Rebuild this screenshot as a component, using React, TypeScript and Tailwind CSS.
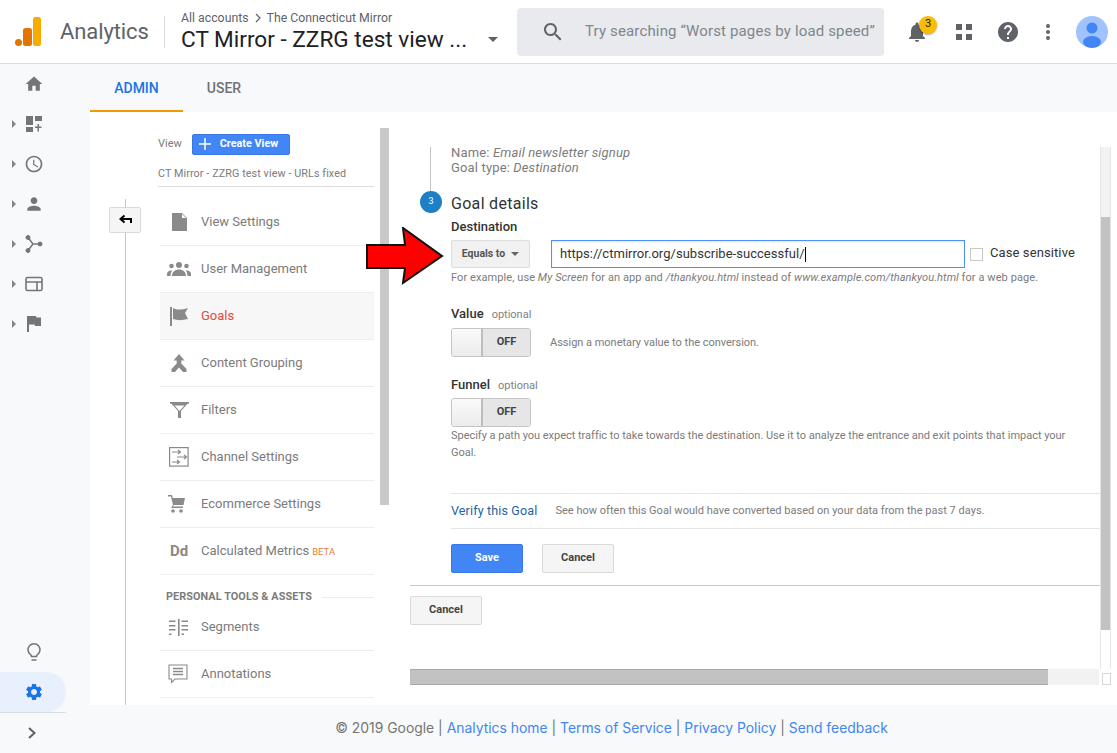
import React from "react";

function P({ d, size = 20, className = "" }: { d: string; size?: number; className?: string }) {
  return (
    <svg width={size} height={size} viewBox="0 0 24 24" fill="currentColor" className={className}>
      <path d={d} />
    </svg>
  );
}

const home = "M10 20v-6h4v6h5v-8h3L12 3 2 12h3v8z";
const person = "M12 12c2.21 0 4-1.79 4-4s-1.79-4-4-4-4 1.79-4 4 1.79 4 4 4zm0 2c-2.67 0-8 1.34-8 4v2h16v-2c0-2.66-5.33-4-8-4z";
const clock = "M11.99 2C6.47 2 2 6.48 2 12s4.47 10 9.99 10C17.52 22 22 17.52 22 12S17.52 2 11.99 2zM12 20c-4.42 0-8-3.58-8-8s3.58-8 8-8 8 3.58 8 8-3.58 8-8 8zm.5-13H11v6l5.25 3.15.75-1.23-4.5-2.67z";
const gear = "M19.14 12.94c.04-.3.06-.61.06-.94 0-.32-.02-.64-.07-.94l2.03-1.58c.18-.14.23-.41.12-.61l-1.92-3.32c-.12-.22-.37-.29-.59-.22l-2.39.96c-.5-.38-1.03-.7-1.62-.94l-.36-2.54c-.04-.24-.24-.41-.48-.41h-3.84c-.24 0-.43.17-.47.41l-.36 2.54c-.59.24-1.13.57-1.62.94l-2.39-.96c-.22-.08-.47 0-.59.22L2.74 8.87c-.12.21-.08.47.12.61l2.03 1.58c-.05.3-.09.63-.09.94s.02.64.07.94l-2.03 1.58c-.18.14-.23.41-.12.61l1.92 3.32c.12.22.37.29.59.22l2.39-.96c.5.38 1.03.7 1.62.94l.36 2.54c.05.24.24.41.48.41h3.84c.24 0 .44-.17.47-.41l.36-2.54c.59-.24 1.13-.56 1.62-.94l2.39.96c.22.08.47 0 .59-.22l1.92-3.32c.12-.22.07-.47-.12-.61l-2.01-1.58zM12 15.6c-1.98 0-3.6-1.62-3.6-3.6s1.62-3.6 3.6-3.6 3.6 1.62 3.6 3.6-1.62 3.6-3.6 3.6z";
const bell = "M12 22c1.1 0 2-.9 2-2h-4c0 1.1.89 2 2 2zm6-6v-5c0-3.07-1.64-5.64-4.5-6.32V4c0-.83-.67-1.5-1.5-1.5s-1.5.67-1.5 1.5v.68C7.63 5.36 6 7.92 6 11v5l-2 2v1h16v-1l-2-2z";
const help = "M12 2C6.48 2 2 6.48 2 12s4.48 10 10 10 10-4.48 10-10S17.52 2 12 2zm1 17h-2v-2h2v2zm2.07-7.75l-.9.92C13.45 12.9 13 13.5 13 15h-2v-.5c0-1.1.45-2.1 1.17-2.83l1.24-1.26c.37-.36.59-.86.59-1.41 0-1.1-.9-2-2-2s-2 .9-2 2H8c0-2.21 1.79-4 4-4s4 1.79 4 4c0 .88-.36 1.68-.93 2.25z";
const search = "M15.5 14h-.79l-.28-.27C15.41 12.59 16 11.11 16 9.5 16 5.91 13.09 3 9.5 3S3 5.91 3 9.5 5.91 16 9.5 16c1.61 0 3.09-.59 4.23-1.57l.27.28v.79l5 4.99L20.49 19l-4.99-5zm-6 0C7.01 14 5 11.99 5 9.5S7.01 5 9.5 5 14 7.01 14 9.5 11.99 14 9.5 14z";

function RailIcon({ children, caret = true }: { children: React.ReactNode; caret?: boolean }) {
  return (
    <div className="relative flex h-10 w-[68px] items-center justify-center text-[#757575]">
      {caret && (
        <span className="absolute left-3 top-[16px] h-0 w-0 border-y-[4px] border-l-[4px] border-y-transparent border-l-[#80868b]" />
      )}
      <span className="flex h-5 w-5 items-center justify-center">{children}</span>
    </div>
  );
}

function Row({ icon, label, active, beta }: { icon: React.ReactNode; label: string; active?: boolean; beta?: boolean }) {
  return (
    <div className={`flex h-[47px] items-center border-b border-[#eeeeee] ${active ? "bg-[#f7f7f7]" : ""}`}>
      <span className="flex w-[38px] shrink-0 items-center justify-center text-[#8a8a8a]">{icon}</span>
      <span className={`ml-[3px] text-[13px] ${active ? "text-[#e5493a]" : "text-[#7b7b7b]"}`}>{label}</span>
      {beta && <span className="ml-[3px] mt-[2px] text-[9.5px] text-[#e8803e]">BETA</span>}
    </div>
  );
}

function Toggle() {
  return (
    <div className="flex h-[29px] w-[80px] overflow-hidden rounded-[3px] border border-[#c4c4c4]">
      <div className="h-full w-[31px] border-r-2 border-[#bdbdbd] bg-gradient-to-b from-[#fafafa] to-[#ececec]" />
      <div className="flex flex-1 items-center justify-center bg-[#e6e6e6] text-[11px] font-bold text-[#444444]">OFF</div>
    </div>
  );
}

function GrayBtn({ children }: { children: React.ReactNode }) {
  return (
    <button className="h-[29px] w-[72px] rounded-[2px] border border-[#d9d9d9] bg-[#f5f5f5] text-[11px] font-bold text-[#444444]">
      {children}
    </button>
  );
}

export default function App() {
  return (
    <div className="flex h-[753px] w-[1117px] flex-col overflow-hidden bg-[#f8f9fa] font-['Roboto',sans-serif]">
      {/* Header */}
      <header className="flex h-[64px] shrink-0 items-center border-b border-[#dadce0] bg-white">
        <svg width="28" height="32" viewBox="0 0 28 32" className="ml-[15px] shrink-0">
          <rect x="18" y="1" width="8" height="29" rx="2.5" fill="#F9AB00" />
          <rect x="8" y="12" width="9" height="18" rx="2.5" fill="#E37400" />
          <circle cx="3.5" cy="26.5" r="3.5" fill="#E37400" />
        </svg>
        <span className="ml-[17px] w-[88px] text-[22px] tracking-[-0.1px] text-[#5f6368]">Analytics</span>
        <div className="ml-[16px] h-[32px] w-px bg-[#dadce0]" />
        <div className="ml-[16px] w-[320px]">
          <div className="mt-[1px] flex items-center text-[12.3px] leading-[14px] text-[#5f6368]">
            All accounts
            <svg width="10" height="10" viewBox="0 0 10 10" className="mx-[4px]"><path d="M3 1l4 4-4 4" fill="none" stroke="#5f6368" strokeWidth="1.2" /></svg>
            The Connecticut Mirror
          </div>
          <div className="mt-[1px] flex items-center">
            <span className="w-[307px] text-[22.6px] leading-[28px] text-[#202124]">CT Mirror - ZZRG test view ...</span>
            <span className="h-0 w-0 border-x-[5px] border-t-[5px] border-x-transparent border-t-[#5f6368]" />
          </div>
        </div>
        <div className="ml-[16px] flex h-[48px] w-[367px] items-center rounded-[4px] bg-[#e8eaed]">
          <P d={search} size={24} className="ml-[24px] text-[#5f6368]" />
          <span className="ml-[20px] whitespace-nowrap text-[15px] tracking-[0.15px] text-[#80868b]">Try searching “Worst pages by load speed”</span>
        </div>
        <div className="relative ml-[21px] flex h-6 w-6 items-center justify-center text-[#5f6368]">
          <P d={bell} size={24} />
          <span className="absolute left-[14px] top-[-4px] flex h-[18px] w-[18px] items-center justify-center rounded-full bg-[#fbbc04] text-[11px] text-[#202124] shadow-[0_1px_2px_rgba(0,0,0,0.35)]">3</span>
        </div>
        <div className="ml-[27px] grid h-[16px] w-[16px] grid-cols-2 gap-[4px]">
          <span className="h-[6px] w-[6px] bg-[#5f6368]" /><span className="h-[6px] w-[6px] bg-[#5f6368]" />
          <span className="h-[6px] w-[6px] bg-[#5f6368]" /><span className="h-[6px] w-[6px] bg-[#5f6368]" />
        </div>
        <P d={help} size={24} className="ml-[24px] text-[#5f6368]" />
        <div className="ml-[26px] flex w-[4px] flex-col gap-[2px]">
          <span className="h-[4px] w-[4px] rounded-full bg-[#5f6368]" />
          <span className="h-[4px] w-[4px] rounded-full bg-[#5f6368]" />
          <span className="h-[4px] w-[4px] rounded-full bg-[#5f6368]" />
        </div>
        <svg width="32" height="32" viewBox="0 0 32 32" className="ml-[26px] shrink-0">
          <clipPath id="av"><circle cx="16" cy="16" r="16" /></clipPath>
          <g clipPath="url(#av)">
            <rect width="32" height="32" fill="#a0c3ff" />
            <circle cx="16" cy="12" r="5.5" fill="#4285f4" />
            <ellipse cx="16" cy="26" rx="9" ry="6" fill="#4285f4" />
          </g>
        </svg>
      </header>

      <div className="flex min-h-0 flex-1">
        {/* Rail */}
        <aside className="flex w-[90px] shrink-0 flex-col">
          <RailIcon caret={false}><P d={home} size={20} /></RailIcon>
          <RailIcon>
            <svg width="18" height="18" viewBox="0 0 18 18" fill="currentColor">
              <rect x="1" y="1" width="7" height="9" /><rect x="10" y="1" width="7" height="5" /><rect x="1" y="12" width="7" height="5" />
              <path d="M12.5 9h1.5v2.5h2.5V13H14v3.5h-1.5V13H10v-1.5h2.5z" />
            </svg>
          </RailIcon>
          <RailIcon><P d={clock} size={20} /></RailIcon>
          <RailIcon><P d={person} size={20} /></RailIcon>
          <RailIcon>
            <svg width="18" height="18" viewBox="0 0 18 18" fill="currentColor" stroke="currentColor">
              <circle cx="3" cy="2.5" r="2" /><circle cx="3" cy="15.5" r="2" /><circle cx="15" cy="9" r="2" />
              <path d="M3 2.5L8 9l-5 6.5M8 9h7" fill="none" strokeWidth="1.5" />
            </svg>
          </RailIcon>
          <RailIcon>
            <svg width="18" height="16" viewBox="0 0 18 16" fill="none" stroke="currentColor" strokeWidth="1.6">
              <rect x="1" y="1.5" width="16" height="13" rx="1.5" />
              <path d="M1 6h16M12 6v8" />
            </svg>
          </RailIcon>
          <RailIcon>
            <svg width="14" height="16" viewBox="0 0 14 16" fill="currentColor"><path d="M0 0h9l.4 1.6H14V10H8l-.4-1.6H2V16H0z" /></svg>
          </RailIcon>
          <div className="flex-1" />
          <div className="flex h-10 w-[68px] items-center justify-center text-[#757575]">
            <svg width="18" height="20" viewBox="0 0 18 20" fill="none" stroke="currentColor" strokeWidth="1.5">
              <path d="M5.5 12.6a6 6 0 1 1 7 0c-.7.5-1 1-1 2h-5c0-1-.3-1.5-1-2z" /><path d="M6.5 18h5" />
            </svg>
          </div>
          <div className="flex h-10 w-[66px] items-center justify-center rounded-r-[20px] bg-[#e8f0fe] pl-[2px] text-[#1a73e8]">
            <P d={gear} size={20} />
          </div>
          <div className="flex h-[41px] w-[66px] items-center justify-center border-t border-[#dadce0] pr-[3px] text-[#5f6368]">
            <svg width="12" height="14" viewBox="0 0 12 14"><path d="M3 2l5.5 5L3 12" fill="none" stroke="currentColor" strokeWidth="2" /></svg>
          </div>
        </aside>

        {/* Main */}
        <main className="flex min-w-0 flex-1 flex-col">
          <div className="flex h-[48px] shrink-0 text-[14px] font-medium">
            <div className="flex w-[93px] items-center justify-center border-b-2 border-[#f29900] pt-[2px] text-[#1a73e8]">ADMIN</div>
            <div className="flex w-[82px] items-center justify-center text-[#5f6368] opacity-90">USER</div>
          </div>

          <div className="flex min-h-0 flex-1 overflow-hidden bg-white pt-4">
            {/* Back column */}
            <div className="relative flex w-[68px] shrink-0 justify-center">
              <div className="mt-[71px] ml-[3px] h-[600px] w-px bg-[#c4c4c4]" />
              <div className="absolute left-[19px] top-[79px] flex h-[26px] w-[32px] items-center justify-center rounded-[2px] border border-[#d9d9d9] bg-[#f5f5f5]">
                <svg width="16" height="12" viewBox="0 0 16 12"><path d="M14 9V5H4M7.5 1.5L3.5 5l4 3.5" fill="none" stroke="#000" strokeWidth="2" /></svg>
              </div>
            </div>

            {/* View column */}
            <section className="w-[216px] shrink-0">
              <div className="flex h-[32px] items-center text-[11px] text-[#7b7b7b]">
                View
                <button className="ml-[10px] flex h-[21px] w-[98px] items-center rounded-[2px] border border-[#3b78e7] bg-[#4285f4] text-[10.8px] font-bold text-white">
                  <svg width="12" height="12" viewBox="0 0 12 12" className="ml-[6px]"><path d="M6 0v12M0 6h12" stroke="#fff" strokeWidth="1.5" /></svg>
                  <span className="ml-[9px]">Create View</span>
                </button>
              </div>
              <div className="flex h-[27px] items-center border-b border-[#dddddd] pt-[2px] text-[10.75px] tracking-[0.1px] text-[#7b7b7b]">CT Mirror - ZZRG test view - URLs fixed</div>
              <div className="ml-[2px]">
                <div className="h-[12px]" />
                <Row label="View Settings" icon={<svg width="15" height="18" viewBox="0 0 15 18" fill="currentColor"><path d="M0 0h10l5 5v13H0zM10 1v4h4z" fillRule="evenodd" /></svg>} />
                <Row label="User Management" icon={
                  <svg width="24" height="14" viewBox="0 0 24 14" fill="currentColor">
                    <circle cx="12" cy="3" r="3" /><circle cx="4.5" cy="4" r="2.3" /><circle cx="19.5" cy="4" r="2.3" />
                    <path d="M5 14c0-4 3-6.5 7-6.5s7 2.500 7 6.500zM0 14v-2c0-2 2-3.500 4-3.500.5 0 1 .1 1.200.2C4 10 3.500 12 3.500 14zM24 14v-2c0-2-2-3.500-4-3.500-.5 0-1 .1-1.200.2 1.200 1.300 1.700 3.300 1.700 5.300z" />
                  </svg>
                } />
                <Row active label="Goals" icon={<svg width="19" height="19" viewBox="0 0 19 19" fill="currentColor"><path d="M0 0h2v19H0zM3 1c4 2 8 2 15 0l-3 5 3 6c-6 1.500-11 1.500-15 0z" /></svg>} />
                <Row label="Content Grouping" icon={<svg width="16" height="18" viewBox="0 0 16 18" fill="currentColor"><path d="M8 0l5.500 6.500H10.300v3L15.500 15v3h-3.500L8 13.500 4 18H.5v-3l5.200-5.500v-3H2.500z" /></svg>} />
                <Row label="Filters" icon={<svg width="19" height="16" viewBox="0 0 19 16" fill="currentColor"><path d="M0 0h19v1.800h-1.500L11 9v7H8V9L1.500 1.800H0zM4.500 3.500L9.500 9l5-5.500z" fillRule="evenodd" /></svg>} />
                <Row label="Channel Settings" icon={
                  <svg width="20" height="20" viewBox="0 0 20 20" fill="none" stroke="currentColor" strokeWidth="1.2">
                    <rect x=".6" y=".6" width="18.500" height="18.500" />
                    <path d="M3 5h8M9 3l2.500 2L9 7M8 10h9M15 8l2.500 2L15 12M3 15h7M8 13l2.500 2L8 17" />
                  </svg>
                } />
                <Row label="Ecommerce Settings" icon={
                  <svg width="18" height="18" viewBox="0 0 18 18" fill="currentColor" className="mr-[5px]">
                    <path d="M0 0h4l.8 3H17l-1.500 7H6l-1 1.500h10V13H3l2-3L3 1.500H0z" /><circle cx="5" cy="16" r="1.800" /><circle cx="13" cy="16" r="1.800" />
                  </svg>
                } />
                <Row beta label="Calculated Metrics" icon={<span className="text-[15px] font-bold tracking-[-0.2px]">Dd</span>} />
              </div>
              <div className="ml-[8px] mt-[14px] flex items-center">
                <span className="text-[10.8px] font-bold tracking-[0.1px] text-[#7b7b7b]">PERSONAL TOOLS &amp; ASSETS</span>
                <span className="ml-[10px] h-px flex-1 bg-[#eeeeee]" />
              </div>
              <div className="ml-[2px] mt-[-1px]">
                <Row label="Segments" icon={
                  <svg width="20" height="17" viewBox="0 0 20 17" fill="currentColor">
                    <rect x="9" y="0" width="1.600" height="17" />
                    <path d="M0 1.500h6.500V3H0zM0 6h6.500v1.500H0zM0 10h6.500v1.500H0zM0 14.500h2.500V16H0zM12.500 1.500H19V3h-6.500zM12.500 6H19v1.500h-6.500zM12.500 10H19v1.500h-6.500zM12.500 14.500H15V16h-2.500z" />
                  </svg>
                } />
                <Row label="Annotations" icon={
                  <svg width="20" height="20" viewBox="0 0 20 20" fill="none" stroke="currentColor" strokeWidth="1.100" className="mr-[3px]">
                    <path d="M1 1h18v14H7l-3.500 3.500V15H1z" />
                    <path d="M5 4.500h10M5 7.500h10M5 10.500h10" strokeWidth="1.300" />
                  </svg>
                } />
              </div>
            </section>

            {/* Left scrollbar */}
            <div className="ml-[6px] h-[377px] w-[9px] shrink-0 bg-[#c8c8c8]" />

            {/* Right pane */}
            <section className="relative ml-[21px] flex w-[701px] shrink-0 flex-col">
              <div className="flex min-h-0 flex-1 flex-col">
                <div className="flex h-[541px] pt-[19px]">
                  <div className="flex w-[690px] flex-col">
                    <div className="relative pl-[41px] text-[13px] leading-[15px] tracking-[0.15px] text-[#7b7b7b]">
                      <span className="absolute left-[20px] top-0 h-[44px] w-px bg-[#c4c4c4]" />
                      <div className="mt-[-2px]">Name: <i>Email newsletter signup</i></div>
                      <div>Goal type: <i>Destination</i></div>
                    </div>
                    <div className="ml-[10px] mt-[14px] flex items-center">
                      <span className="relative flex h-[22px] w-[22px] items-center justify-center rounded-full bg-[#1f7fc4] text-[9px] text-white">3</span>
                      <span className="ml-[9px] pt-[4px] text-[16px] leading-[22px] tracking-[0.3px] text-[#333333]">Goal details</span>
                    </div>
                    <div className="ml-[41px] mt-[4px] text-[13px] font-medium leading-[16px] text-[#333333]">Destination</div>
                    <div className="ml-[41px] mt-[5px] flex items-center">
                      <div className="flex h-[28px] w-[79px] items-center justify-center rounded-[2px] border border-[#dddddd] bg-[#f1f1f1] text-[10.5px] font-bold text-[#555555]">
                        Equals to
                        <span className="ml-[6px] h-0 w-0 border-x-[4px] border-t-[4px] border-x-transparent border-t-[#666666]" />
                      </div>
                      <div className="ml-[21px] flex h-[28px] w-[414px] items-center border border-[#4d90fe] pl-[8px] text-[13px] tracking-[0.03px] text-[#333333] shadow-[inset_0_1px_2px_rgba(0,0,0,0.1)]">
                        https://ctmirror.org/subscribe-successful/<span className="h-[15px] w-px bg-black" />
                      </div>
                      <span className="ml-[5px] h-[13px] w-[13px] border border-[#c9c9c9]" />
                      <span className="ml-[7px] mt-[-2px] text-[13px] tracking-[0.1px] text-[#333333]">Case sensitive</span>
                    </div>
                    <div className="ml-[41px] mt-[2px] text-[11px] leading-[15px] tracking-[0.08px] text-[#7b7b7b]">
                      For example, use <i>My Screen</i> for an app and <i>/thankyou.html</i> instead of <i>www.example.com/thankyou.html</i> for a web page.
                    </div>
                    <div className="ml-[41px] mt-[21px] flex items-baseline text-[13px] font-medium leading-[16px] text-[#333333]">
                      Value<span className="ml-[8px] text-[11px] font-normal text-[#808080]">optional</span>
                    </div>
                    <div className="ml-[41px] mt-[5px] flex items-center">
                      <Toggle />
                      <span className="ml-[19px] pt-[1px] text-[11px] tracking-[-0.02px] text-[#7b7b7b]">Assign a monetary value to the conversion.</span>
                    </div>
                    <div className="ml-[41px] mt-[20px] flex items-baseline text-[13px] font-medium leading-[16px] text-[#333333]">
                      Funnel<span className="ml-[8px] text-[11px] font-normal text-[#808080]">optional</span>
                    </div>
                    <div className="ml-[41px] mt-[4px]"><Toggle /></div>
                    <div className="ml-[41px] w-[630px] text-[11px] leading-[17px] tracking-[-0.02px] text-[#7b7b7b]">
                      Specify a path you expect traffic to take towards the destination. Use it to analyze the entrance and exit points that impact your Goal.
                    </div>
                    <div className="ml-[41px] mt-[32px] flex h-[36px] shrink-0 items-center border-y border-[#e5e5e5]">
                      <span className="text-[12.5px] tracking-[0.15px] text-[#22649e]">Verify this Goal</span>
                      <span className="ml-[18px] text-[11px] tracking-[0.02px] text-[#7b7b7b]">See how often this Goal would have converted based on your data from the past 7 days.</span>
                    </div>
                    <div className="ml-[41px] mt-[15px] flex gap-[19px]">
                      <button className="h-[29px] w-[72px] rounded-[2px] border border-[#3b78e7] bg-[#4285f4] text-[11px] font-bold text-white">Save</button>
                      <GrayBtn>Cancel</GrayBtn>
                    </div>
                    <div className="mt-[12px] h-px shrink-0 bg-[#c9c9c9]" />
                    <div className="mt-[10px]"><GrayBtn>Cancel</GrayBtn></div>
                  </div>
                  {/* Vertical scrollbar */}
                  <div className="flex w-[11px] shrink-0 flex-col border-x border-[#e5e5e5]">
                    <div className="h-[70px] bg-[#f2f2f2]" />
                    <div className="h-[413px] bg-[#c2c2c2]" />
                    <div className="flex-1 bg-white" />
                  </div>
                </div>
                {/* Horizontal scrollbar */}
                <div className="flex h-[16px] shrink-0">
                  <div className="h-full w-[639px] border-y border-[#a8a8a8] bg-[#c2c2c2]" />
                  <div className="h-full w-[51px] bg-[#f2f2f2]" />
                  <div className="ml-[3px] mt-[4px] h-[12px] w-[9px] border border-[#d9d9d9]" />
                </div>
              </div>
              <div className="h-[20px] shrink-0" />
              {/* Red arrow */}
              <svg width="80" height="60" viewBox="0 0 80 60" className="absolute left-[-44px] top-[99px]">
                <path d="M1 18h38l-2-17 39 28-39 27 2-15H1z" fill="#ff0000" stroke="#111" strokeWidth="2" strokeLinejoin="miter" />
              </svg>
            </section>
          </div>

          {/* Footer */}
          <footer className="flex h-[48px] shrink-0 items-center justify-center pb-[1px] pl-[16px] font-['Inter',sans-serif] text-[13.9px] text-[#757575]">
            © 2019 Google |&nbsp;<span className="text-[#4285f4]">Analytics home</span>&nbsp;|&nbsp;<span className="text-[#4285f4]">Terms of Service</span>&nbsp;|&nbsp;<span className="text-[#4285f4]">Privacy Policy</span>&nbsp;|&nbsp;<span className="text-[#4285f4]">Send feedback</span>
          </footer>
        </main>
      </div>
    </div>
  );
}
